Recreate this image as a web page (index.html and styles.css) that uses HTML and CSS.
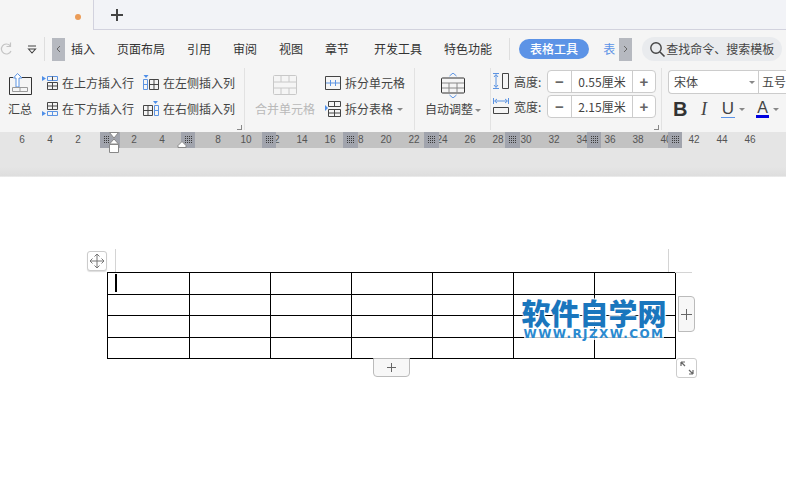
FILE: index.html
```html
<!DOCTYPE html>
<html lang="zh">
<head>
<meta charset="utf-8">
<title>表格工具</title>
<link rel="stylesheet" href="styles.css">
</head>
<body>
<div class="tabbar">
  <div class="tab"><span class="dot"></span></div>
  <svg class="newtab" width="14" height="14" viewBox="0 0 14 14"><path d="M7 1v12M1 7h12" stroke="#444" stroke-width="2"/></svg>
</div>

<div class="menubar">
  <svg class="redo" width="13" height="14" viewBox="0 0 13 14"><path d="M10 3.500A5 5 0 1 0 11 9M10.500 .5v4h-4" fill="none" stroke="#c4c4c4" stroke-width="1.200"/></svg>
  <svg class="qa" width="10" height="9" viewBox="0 0 10 9"><path d="M1 1h8M1.500 4l3.500 4 3.500-4z" fill="none" stroke="#444" stroke-width="1.100"/></svg>
  <span class="menusep"></span>
  <span class="scroll"><svg width="5" height="8" viewBox="0 0 5 8"><path d="M4 1 1 4l3 3" fill="none" stroke="#666"/></svg></span>
  <nav class="menus">
    <span>插入</span><span>页面布局</span><span>引用</span><span>审阅</span><span>视图</span><span>章节</span><span class="wide">开发工具</span><span>特色功能</span>
  </nav>
  <span class="menusep sep2"></span>
  <span class="pill">表格工具</span>
  <span class="clipped">表</span>
  <span class="scroll right"><svg width="5" height="8" viewBox="0 0 5 8"><path d="M1 1l3 3-3 3" fill="none" stroke="#666"/></svg></span>
  <div class="search">
    <svg width="17" height="17" viewBox="0 0 17 17"><circle cx="7" cy="7" r="5.200" fill="none" stroke="#444" stroke-width="1.400"/><path d="M11 11l4.500 4.500" stroke="#444" stroke-width="1.600"/></svg>
    <span>查找命令、搜索模板</span>
  </div>
</div>

<div class="ribbon">
  <section class="group g1">
    <div class="big sum">
      <svg width="24" height="22" viewBox="0 0 24 22"><path d="M5 4.500H1.500v17h22v-17H14" fill="none" stroke="#333"/><path d="M9.500 .5 5.500 5H8v9h3V5h3z" fill="#fff" stroke="#5b93e2"/><path d="M4.500 14.500h15v4h-15zM12 14.500v4" fill="none" stroke="#999"/></svg>
      <span>汇总</span>
    </div>
    <div class="insgrid">
      <div class="row"><svg width="16" height="16" viewBox="0 0 16 16"><path d="M0 1l4 2.500L0 6z" fill="#4f8fe8"/><path d="M5.500 1.500h10v4h-10z" fill="none" stroke="#5b93e2"/><path d="M5.500 7.500h10v7h-10zM5.500 11h10M10.500 7.500v7M10.500 1.500v4" fill="none" stroke="#444"/></svg><span>在上方插入行</span></div>
      <div class="row"><svg width="16" height="16" viewBox="0 0 16 16"><path d="M.500 0h5l-2.500 3z" fill="#4f8fe8"/><path d="M.500 4.500h4v10h-4zM.500 9.500h4" fill="none" stroke="#5b93e2"/><path d="M6.500 4.500h9v10h-9zM6.500 9.500h9M11 4.500v10" fill="none" stroke="#444"/></svg><span>在左侧插入列</span></div>
      <div class="row"><svg width="16" height="16" viewBox="0 0 16 16"><path d="M0 10l4 2.500L0 15z" fill="#4f8fe8"/><path d="M5.500 1.500h10v7h-10zM5.500 5h10M10.500 1.500v7" fill="none" stroke="#444"/><path d="M5.500 10.500h10v4h-10zM10.500 10.500v4" fill="none" stroke="#5b93e2"/></svg><span>在下方插入行</span></div>
      <div class="row"><svg width="16" height="16" viewBox="0 0 16 16"><path d="M10 0h5l-2.500 3z" fill="#4f8fe8"/><path d="M11.500 4.500h4v10h-4zM11.500 9.500h4" fill="none" stroke="#5b93e2"/><path d="M.500 4.500h9v10h-9zM.500 9.500h9M5 4.500v10" fill="none" stroke="#444"/></svg><span>在右侧插入列</span></div>
    </div>
    <i class="corner"></i>
  </section>

  <section class="group g2">
    <div class="big merge">
      <svg width="24" height="20" viewBox="0 0 24 20"><path d="M1.500.500h21a1 1 0 0 1 1 1v17a1 1 0 0 1-1 1h-21a1 1 0 0 1-1-1v-17a1 1 0 0 1 1-1z" fill="none" stroke="#c8c8c8"/><path d="M0 7h24M0 13h24M8 1v6M16 1v6M8 13v6M16 13v6" stroke="#c8c8c8"/></svg>
      <span>合并单元格</span>
    </div>
    <div class="splits">
      <div class="row"><svg width="16" height="14" viewBox="0 0 16 14"><path d="M.500.500h15v13h-15z" fill="none" stroke="#444"/><path d="M1 7h14M5.500 4v6M10.500 4v6" stroke="#5b93e2"/></svg><span>拆分单元格</span></div>
      <div class="row"><svg width="16" height="16" viewBox="0 0 16 16"><path d="M0 4l3 3-3 3z" fill="#4f8fe8"/><path d="M3.500.500h12v5h-12zM3.500 8.500h12v7h-12zM3.500 12h12M9.500 .5v5M9.500 8.500v7" fill="none" stroke="#444"/></svg><span>拆分表格</span><b class="caret flush"></b></div>
    </div>
  </section>

  <section class="group g3">
    <div class="big auto">
      <svg width="24" height="25" viewBox="0 0 24 25"><path d="M8.500 3 12 0l3.500 3M8.500 22l3.500 3 3.500-3" fill="none" stroke="#5b93e2"/><path d="M1.500 5h21a1 1 0 0 1 1 1v13a1 1 0 0 1-1 1h-21a1 1 0 0 1-1-1V6a1 1 0 0 1 1-1z" fill="none" stroke="#333"/><path d="M1 10h22M1 15h22M8 10v10M16 10v10" stroke="#888"/></svg>
      <span>自动调整<b class="caret"></b></span>
    </div>
  </section>

  <section class="group g4">
    <div class="sizeicons">
      <svg width="16" height="16" viewBox="0 0 16 16"><path d="M0 .5h6M0 15.500h6M3 2v12M1 4l2-2.500L5 4M1 12l2 2.500L5 12" fill="none" stroke="#5b93e2"/><path d="M9.500.500h6v15h-6z" fill="none" stroke="#444"/></svg>
      <svg width="16" height="16" viewBox="0 0 16 16"><path d="M.500 0v6M15.500 0v6M2 3h12M4 1 1.500 3 4 5M12 1l2.500 2L12 5" fill="none" stroke="#5b93e2"/><path d="M.500 9.500h15v6h-15z" fill="none" stroke="#444"/></svg>
    </div>
    <div class="sizes">
      <div class="sizerow"><label>高度:</label><div class="stepper"><span class="op">−</span><span class="val">0.55厘米</span><span class="op">+</span></div></div>
      <div class="sizerow"><label>宽度:</label><div class="stepper"><span class="op">−</span><span class="val">2.15厘米</span><span class="op">+</span></div></div>
    </div>
    <i class="corner"></i>
  </section>

  <section class="group g5">
    <div class="fontsel">
      <span class="fname">宋体<b class="caret"></b></span><span class="fsize">五号</span>
    </div>
    <div class="fmt">
      <span class="bold">B</span>
      <span class="ital">I</span>
      <span class="under">U</span><b class="caret"></b>
      <span class="color">A</span><b class="caret"></b>
    </div>
  </section>
</div>

<div class="ruler">
  <span>6</span><span>4</span><span>2</span><span></span><span>2</span><span>4</span><span></span><span>8</span><span>10</span><span>12</span><span>14</span><span>16</span><span>18</span><span>20</span><span>22</span><span>24</span><span>26</span><span>28</span><span>30</span><span>32</span><span>34</span><span>36</span><span>38</span><span>40</span><span>42</span><span>44</span><span>46</span>
  <i class="handle h1"></i><i class="handle h2"></i><i class="handle h3"></i><i class="handle h4"></i><i class="handle h5"></i><i class="handle h6"></i><i class="handle h7"></i><i class="handle h8"></i>
  <svg class="marker m1" width="12" height="22" viewBox="0 0 12 22"><path d="M1.500 .5h9L6 6zM6 7l4.500 5h-9zM1.500 12.500h9v8h-9z" fill="#fff" stroke="#888"/></svg>
  <svg class="marker m2" width="10" height="7" viewBox="0 0 10 7"><path d="M5 .5l4 4v2H1v-2z" fill="#fff" stroke="#888"/></svg>
</div>
<div class="gutter"></div>

<main class="doc">
  <table class="grid">
    <tr><td><i class="cursor"></i></td><td></td><td></td><td></td><td></td><td></td><td></td></tr>
    <tr class="r2"><td></td><td></td><td></td><td></td><td></td><td></td><td></td></tr>
    <tr class="r3"><td></td><td></td><td></td><td></td><td></td><td></td><td></td></tr>
    <tr class="r4"><td></td><td></td><td></td><td></td><td></td><td></td><td></td></tr>
  </table>
  <span class="tool move"><svg width="16" height="16" viewBox="0 0 16 16"><path d="M8 1v14M1 8h14M5.500 3.500 8 1l2.500 2.500M5.500 12.500 8 15l2.500-2.500M3.500 5.500 1 8l2.500 2.500M12.500 5.500 15 8l-2.500 2.500" fill="none" stroke="#777"/></svg></span>
  <i class="guide v1"></i><i class="guide v2"></i><i class="guide h"></i>
  <span class="tool addcol"><svg width="11" height="11" viewBox="0 0 11 11"><path d="M5.500 0v11M0 5.500h11" stroke="#666"/></svg></span>
  <span class="tool addrow"><svg width="11" height="11" viewBox="0 0 11 11"><path d="M5.500 1v9M1 5.500h9" stroke="#666"/></svg></span>
  <span class="tool resize"><svg width="14" height="14" viewBox="0 0 14 14"><path d="M1 1l4 4M1 1h4M1 1v4M13 13 9 9M13 13H9M13 13V9" fill="none" stroke="#666" stroke-width="1.200"/></svg></span>
  <div class="mark">
    <strong>软件自学网</strong>
    <em>WWW.RJZXW.COM</em>
  </div>
</main>
</body>
</html>
```

FILE: styles.css
```css
* { box-sizing: border-box; }
html, body { margin: 0; height: 100%; overflow: hidden; background: #fff; }
body { font: 12px/16px "Noto Sans CJK SC", "Liberation Sans", sans-serif; color: #444; }

.tabbar { height: 30px; display: flex; align-items: center; background: #f2f3f7; border-bottom: 1px solid #d2d2de; }
.tab { width: 94px; height: 30px; margin-bottom: -1px; background: #f5f5f5; border-right: 1px solid #d2d2de; display: flex; align-items: center; justify-content: flex-end; padding: 0 12px 0 0; align-self: flex-start; }
.dot { width: 6px; height: 6px; border-radius: 50%; background: #eb9c57; margin-top: 4px; }
.newtab { margin-left: 16px; }

.menubar { height: 36px; padding-top: 2px; background: #f5f5f5; display: flex; align-items: center; }
.qa { margin-left: 14px; margin-top: 1px; }
.menusep { width: 1px; height: 24px; background: #dedede; margin-left: 7px; }
.scroll { width: 13px; height: 23px; background: #b6b9c0; display: flex; align-items: center; justify-content: center; margin-left: 7px; }
.menus { display: flex; gap: 22px; margin-left: 6px; color: #333; }
.menus .wide { margin-left: 3px; }
.sep2 { margin-left: 17px; height: 22px; }
.pill { width: 70px; height: 20px; line-height: 20px; margin-left: 9px; background: #5c93e6; color: #fff; border-radius: 10px; text-align: center; font-weight: 500; }
.clipped { margin-left: 14px; width: 14px; color: #5c93e6; }
.scroll.right { margin-left: 2px; }
.search { width: 140px; height: 24px; margin-left: 10px; background: #e9ebee; border-radius: 12px; display: flex; align-items: center; padding-left: 7px; color: #444; }

.ribbon { height: 66px; background: #f5f5f5; display: flex; padding: 2px 0; }
.group { position: relative; border-right: 1px solid #e2e2e2; display: flex; flex: none; }
.g1 { width: 245px; padding: 0 0 0 8px; }
.g2 { width: 170px; padding: 0 0 0 10px; }
.g3 { width: 76px; padding: 0 0 0 10px; }
.g4 { width: 171px; padding: 2px 0 0 2px; }
.g5 { flex: 1; border: 0; padding: 2px 0 0 6px; display: block; }
.corner { position: absolute; right: 2px; bottom: 0; width: 5px; height: 5px; border-right: 1px solid #888; border-bottom: 1px solid #888; }

.row { display: flex; align-items: center; gap: 4px; height: 26px; white-space: nowrap; }
.big { display: flex; flex-direction: column; align-items: center; }
.sum { width: 24px; padding-top: 5px; gap: 6px; white-space: nowrap; }
.insgrid { display: grid; grid-template-columns: 92px 92px; column-gap: 9px; grid-auto-rows: 26px; margin-left: 10px; align-content: start; padding-top: 2px; }
.merge { width: 60px; padding-top: 7px; gap: 6px; color: #b9b9b9; white-space: nowrap; }
.splits { margin-left: 10px; padding-top: 2px; }
.auto { width: 56px; padding-top: 5px; gap: 3px; white-space: nowrap; }
.caret { display: inline-block; width: 0; height: 0; border: 3px solid transparent; border-top: 3px solid #888; border-bottom: 0; margin-left: 4px; vertical-align: middle; }
.caret.flush { margin-left: 0; }
.auto .caret { margin-left: 2px; }

.sizeicons { display: flex; flex-direction: column; gap: 9px; padding-top: 3px; }
.sizes { margin-left: 5px; display: flex; flex-direction: column; gap: 2px; }
.sizerow { display: flex; align-items: center; height: 23px; }
.sizerow label { width: 33px; }
.stepper { width: 109px; height: 23px; border: 1px solid #ccc; border-radius: 4px; background: #fff; display: flex; align-items: center; }
.op { width: 23px; text-align: center; font-size: 15px; font-weight: 700; color: #666; font-family: "Liberation Sans", sans-serif; }
.val { width: 62px; height: 100%; line-height: 21px; border: solid #ccc; border-width: 0 1px; text-align: center; }
.stepper .op:last-child { flex: 1; }

.fontsel { display: flex; width: 130px; height: 24px; border: 1px solid #ccc; border-right: 0; border-radius: 4px 0 0 4px; background: #fff; line-height: 22px; }
.fname { width: 90px; padding-left: 5px; border-right: 1px solid #ccc; display: flex; align-items: center; justify-content: space-between; padding-right: 3px; }
.fsize { padding-left: 3px; white-space: nowrap; }
.fmt { display: flex; align-items: center; height: 26px; margin-top: 2px; padding-left: 5px; font-family: "Liberation Sans", sans-serif; }
.bold { font-size: 20px; font-weight: 700; color: #333; width: 26px; }
.ital { font: italic 18px/18px "Liberation Serif", serif; width: 22px; color: #444; padding-left: 2px; }
.under { font-size: 17px; border-bottom: 1px solid #5c93e6; width: 14px; line-height: 17px; text-align: center; }
.color { font-size: 16px; border-bottom: 3px solid #0000e0; width: 13px; line-height: 15px; margin-left: 11px; text-align: center; }

.ruler { position: relative; height: 16px; display: flex; padding-left: 8px; font: 10px/16px "Liberation Sans", sans-serif; color: #555;
  background: linear-gradient(to right, #e5e5e5 100px, #c2c2c2 100px, #c2c2c2 682px, #e5e5e5 682px); }
.ruler span { width: 28px; flex: none; text-align: center; }
.handle { position: absolute; top: 0; height: 16px; padding: 4px 3px; background: conic-gradient(#3c3c3c 25%, transparent 0) content-box 0 0 / 2px 2px, #a1a4ad; }
.h1 { left: 100px; width: 20px; padding-left: 3px; padding-right: 10px; }
.h2 { left: 181px; width: 14px; }
.h3 { left: 262px; width: 14px; }
.h4 { left: 343px; width: 15px; }
.h5 { left: 424px; width: 15px; }
.h6 { left: 505px; width: 15px; }
.h7 { left: 587px; width: 14px; }
.h8 { left: 668px; width: 14px; }
.marker { position: absolute; }
.m1 { left: 108px; top: 0; }
.m2 { left: 177px; top: 9px; }

.gutter { height: 29px; background: linear-gradient(#e5e5e5 65%, #dedede 95%, #f0f0f0); }

.doc { position: relative; padding: 95px 0 0 107px; }
.grid { border-collapse: collapse; table-layout: fixed; width: 569px; border: 1px solid #000; }
.grid td { border: 1px solid #000; padding: 0; height: 22px; width: 81px; position: relative; }
.grid td:first-child { width: 82px; }
.r2 td { height: 21px; }
.r3 td { height: 22px; }
.r4 td { height: 21px; }
.cursor { position: absolute; left: 7px; top: 1px; width: 2px; height: 18px; background: #000; }

.tool { position: absolute; display: flex; align-items: center; justify-content: center; border: 1px solid #ccc; border-radius: 3px; background: #fff; }
.move { left: 87px; top: 74px; width: 20px; height: 20px; box-shadow: 0 1px 1px #ddd; }
.addcol { left: 678px; top: 119px; width: 17px; height: 36px; border-radius: 0 4px 4px 0; background: #f7f7f7; border-color: #bbb; }
.addrow { left: 373px; top: 181px; width: 37px; height: 19px; border-radius: 0 0 4px 4px; background: #f7f7f7; border-color: #bbb; }
.resize { left: 676px; top: 181px; width: 21px; height: 20px; }
.guide { position: absolute; background: #d4d4d4; }
.v1 { left: 115px; top: 72px; width: 1px; height: 23px; }
.v2 { left: 668px; top: 72px; width: 1px; height: 23px; }
.h { left: 675px; top: 95px; width: 17px; height: 1px; }

.mark { position: absolute; left: 521px; top: 120px; width: 146px; display: flex; flex-direction: column; align-items: center; color: #1a76bd; }
.mark strong { font: 900 29px/31px "Noto Sans CJK SC", sans-serif; white-space: nowrap; text-shadow: 0 0 2px #fff, 0 0 2px #fff, 1px 1px 1px #fff, -1px -1px 1px #fff; }
.mark em { font: 700 12px/12px "DejaVu Sans", "Liberation Sans", sans-serif; letter-spacing: 1.4px; white-space: nowrap; color: #2a8ad0; background: rgba(255,255,255,.75); }
```
